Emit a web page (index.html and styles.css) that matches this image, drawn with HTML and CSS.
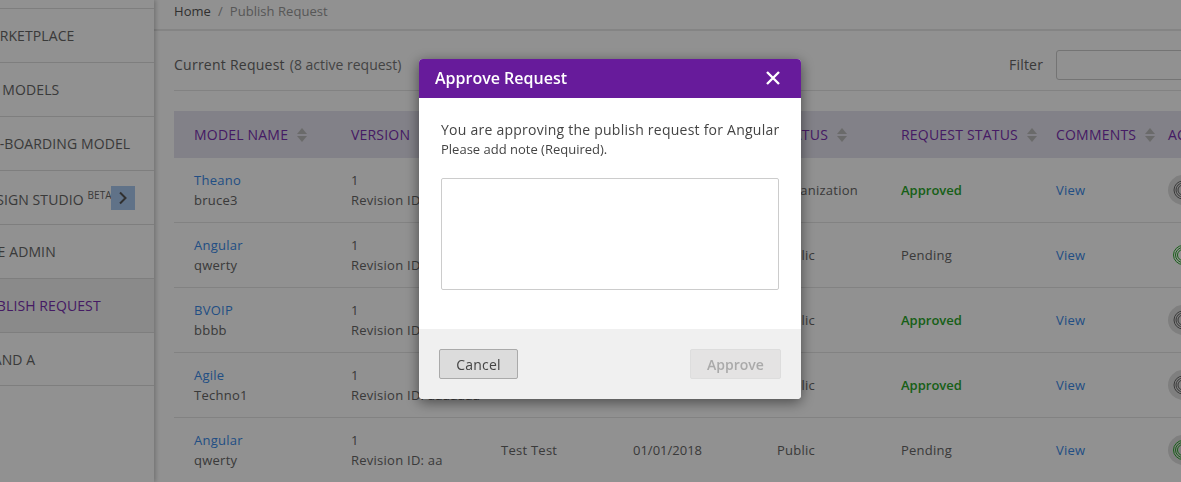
FILE: index.html
```html
<!DOCTYPE html>
<html lang="en">
<head>
  <meta charset="UTF-8" />
  <title>Publish Request</title>
  <link rel="stylesheet" href="styles.css">
</head>
<body>
  <div class="page">
    <nav class="sidebar">
      <a class="nav-item">MARKETPLACE</a>
      <a class="nav-item">MY MODELS</a>
      <a class="nav-item">ON-BOARDING MODEL</a>
      <a class="nav-item nav-beta">DESIGN STUDIO <sup>BETA</sup>
        <span class="nav-toggle">
          <svg width="10" height="14" viewBox="0 0 10 14"><path d="M2 1.5 7.5 7 2 12.5" fill="none" stroke="#555" stroke-width="2"/></svg>
        </span>
      </a>
      <a class="nav-item">SITE ADMIN</a>
      <a class="nav-item active">PUBLISH REQUEST</a>
      <a class="nav-item">Q AND A</a>
    </nav>

    <main class="main">
      <div class="breadcrumb"><span class="crumb-home">Home</span><span class="crumb-sep">/</span><span class="crumb-now">Publish Request</span></div>

      <div class="content">
        <div class="title-row">
          <div class="title">Current Request <span class="title-count">(8 active request)</span></div>
          <label class="filter">Filter <input class="filter-input" type="text"></label>
        </div>

        <table class="requests">
          <colgroup>
            <col class="c-name"><col class="c-version"><col class="c-by"><col class="c-date">
            <col class="c-status"><col class="c-request"><col class="c-comments"><col class="c-action">
          </colgroup>
          <thead>
            <tr>
              <th>MODEL NAME <i class="sort"></i></th>
              <th>VERSION <i class="sort"></i></th>
              <th>REQUESTER <i class="sort"></i></th>
              <th>DATE <i class="sort"></i></th>
              <th>STATUS <i class="sort"></i></th>
              <th>REQUEST STATUS <i class="sort"></i></th>
              <th>COMMENTS <i class="sort"></i></th>
              <th>ACTION</th>
            </tr>
          </thead>
          <tbody>
            <tr>
              <td><a class="link">Theano</a><br>bruce3</td>
              <td>1<br>Revision ID: aa</td>
              <td>Test Test</td>
              <td class="date">01/01/2018</td>
              <td>Organization</td>
              <td class="approved">Approved</td>
              <td><a class="link">View</a></td>
              <td><span class="action"><svg width="30" height="30" viewBox="0 0 30 30"><g fill="none" stroke="#666"><circle cx="15" cy="15" r="9"/><circle cx="15" cy="15" r="7"/><circle cx="15" cy="15" r="5"/></g></svg></span></td>
            </tr>
            <tr>
              <td><a class="link">Angular</a><br>qwerty</td>
              <td>1<br>Revision ID: aa</td>
              <td>Test Test</td>
              <td class="date">01/01/2018</td>
              <td>Public</td>
              <td>Pending</td>
              <td><a class="link">View</a></td>
              <td><span class="action plain"><svg width="30" height="30" viewBox="0 0 30 30"><g fill="none" stroke="#2aa82a"><circle cx="15" cy="15" r="9.5"/><circle cx="15" cy="15" r="7.5"/><circle cx="15" cy="15" r="5.5"/></g></svg></span></td>
            </tr>
            <tr>
              <td><a class="link">BVOIP</a><br>bbbb</td>
              <td>1<br>Revision ID: aa</td>
              <td>Test Test</td>
              <td class="date">01/01/2018</td>
              <td>Public</td>
              <td class="approved">Approved</td>
              <td><a class="link">View</a></td>
              <td><span class="action"><svg width="30" height="30" viewBox="0 0 30 30"><g fill="none" stroke="#666"><circle cx="15" cy="15" r="9"/><circle cx="15" cy="15" r="7"/><circle cx="15" cy="15" r="5"/></g></svg></span></td>
            </tr>
            <tr>
              <td><a class="link">Agile</a><br>Techno1</td>
              <td>1<br>Revision ID: aaaaaaa</td>
              <td>Test Test</td>
              <td class="date">01/01/2018</td>
              <td>Public</td>
              <td class="approved">Approved</td>
              <td><a class="link">View</a></td>
              <td><span class="action"><svg width="30" height="30" viewBox="0 0 30 30"><g fill="none" stroke="#666"><circle cx="15" cy="15" r="9"/><circle cx="15" cy="15" r="7"/><circle cx="15" cy="15" r="5"/></g></svg></span></td>
            </tr>
            <tr>
              <td><a class="link">Angular</a><br>qwerty</td>
              <td>1<br>Revision ID: aa</td>
              <td>Test Test</td>
              <td class="date">01/01/2018</td>
              <td>Public</td>
              <td>Pending</td>
              <td><a class="link">View</a></td>
              <td><span class="action"><svg width="30" height="30" viewBox="0 0 30 30"><g fill="none" stroke="#2aa82a"><circle cx="15" cy="15" r="9.5"/><circle cx="15" cy="15" r="7.5"/><circle cx="15" cy="15" r="5.5"/></g></svg></span></td>
            </tr>
          </tbody>
        </table>
      </div>
    </main>
  </div>

  <div class="backdrop"></div>

  <div class="modal">
    <div class="modal-head">
      <span class="modal-title">Approve Request</span>
      <svg class="modal-close" width="16" height="16" viewBox="0 0 16 16"><path d="M2 2 14 14M14 2 2 14" stroke="#fff" stroke-width="2.4" fill="none"/></svg>
    </div>
    <div class="modal-body">
      <p class="modal-text">You are approving the publish request for Angular</p>
      <p class="modal-hint">Please add note (Required).</p>
      <textarea class="modal-note"></textarea>
    </div>
    <div class="modal-foot">
      <button class="btn btn-cancel">Cancel</button>
      <button class="btn btn-approve" disabled>Approve</button>
    </div>
  </div>
</body>
</html>
```

FILE: styles.css
```css
* {
  box-sizing: border-box;
}

html, body {
  height: 100%;
}

body {
  margin: 0;
  overflow: hidden;
  background: #fff;
  color: #666;
  font-family: "Open Sans", sans-serif;
  font-size: 13px;
}

.page {
  display: flex;
  height: 482px;
  margin-left: -22px;
  width: 1300px;
}

/* sidebar */
.sidebar {
  flex: none;
  width: 176px;
  padding-top: 8px;
  background: #fff;
  box-shadow: 2px 0 4px rgba(0, 0, 0, 0.2);
  position: relative;
  z-index: 1;
}

.nav-item {
  display: block;
  position: relative;
  height: 54px;
  line-height: 53px;
  border-top: 1px solid #ddd;
  font-size: 14px;
  font-weight: 500;
  letter-spacing: 0.1px;
  color: #666;
  white-space: nowrap;
}

.nav-item:last-child {
  border-bottom: 1px solid #ddd;
}

.nav-item sup {
  font-size: 10px;
  font-weight: 400;
  line-height: 0;
}

.nav-beta {
  line-height: 57px;
}

.nav-item.active {
  background: #f2f2f2;
  color: #7a30b0;
}

.nav-toggle {
  position: absolute;
  left: 133px;
  top: 15px;
  width: 24px;
  height: 24px;
  background: #a9c8f0;
  display: flex;
  align-items: center;
  justify-content: center;
}

/* main */
.main {
  flex: 1;
  min-width: 0;
}

.breadcrumb {
  display: flex;
  align-items: center;
  height: 38px;
  padding-left: 20px;
  margin-top: -7px;
  border-bottom: 2px solid #e8e8e8;
  letter-spacing: 0.05px;
}

.crumb-home {
  color: #555;
}

.crumb-sep {
  margin: 0 7px;
  color: #999;
}

.crumb-now {
  color: #999;
}

.content {
  padding: 0 20px;
}

.title-row {
  display: flex;
  align-items: center;
  height: 60px;
  padding-top: 8px;
  border-bottom: 1px solid #e5e5e5;
}

.title {
  flex: none;
  width: 835px;
  font-size: 14px;
  letter-spacing: 0.25px;
  font-weight: 500;
}

.title-count {
  margin-left: 1px;
  font-weight: 400;
  letter-spacing: 0;
  color: #777;
}

.filter {
  display: flex;
  align-items: center;
  gap: 13px;
  font-size: 14px;
  font-weight: 500;
  letter-spacing: 0.2px;
}

.filter-input {
  width: 200px;
  height: 30px;
  border: 1px solid #ccc;
  border-radius: 3px;
  background: #fff;
}

/* table */
.requests {
  table-layout: fixed;
  border-collapse: separate;
  border-spacing: 0;
  width: 1082px;
  margin-top: 20px;
}

.c-name { width: 157px; }
.c-version { width: 150px; }
.c-by { width: 132px; }
.c-date { width: 144px; }
.c-status { width: 124px; }
.c-request { width: 155px; }
.c-comments { width: 112px; }
.c-action { width: 108px; }

.requests th {
  height: 47px;
  padding: 0 0 1px 20px;
  background: #e5e3ef;
  color: #7a30b0;
  font-size: 14px;
  font-weight: 500;
  letter-spacing: 0.2px;
  text-align: left;
  white-space: nowrap;
}

.requests td {
  height: 65px;
  padding: 0 0 0 20px;
  border-bottom: 1px solid #e5e5e5;
  line-height: 20px;
  letter-spacing: 0.25px;
  white-space: nowrap;
  vertical-align: middle;
}

.requests td.date {
  letter-spacing: 0;
}

.link {
  color: #3a8ae8;
  font-weight: 500;
}

.requests td:first-child .link {
  font-weight: 400;
}

.requests td.approved {
  color: #2aa82a;
  font-weight: 600;
  letter-spacing: 0;
}

.sort {
  display: inline-block;
  position: relative;
  width: 10px;
  height: 14px;
  margin-left: 5px;
  vertical-align: -2px;
}

.sort::before, .sort::after {
  content: "";
  position: absolute;
  left: 0;
  border-left: 5px solid transparent;
  border-right: 5px solid transparent;
}

.sort::before {
  top: 0;
  border-bottom: 6px solid #bbb;
}

.sort::after {
  bottom: 0;
  border-top: 6px solid #bbb;
}

.action {
  display: inline-flex;
  width: 30px;
  height: 30px;
  border-radius: 50%;
  background: #e0e0e0;
  vertical-align: middle;
}

.action.plain {
  background: none;
}

/* modal */
.backdrop {
  position: fixed;
  inset: 0;
  background: rgba(0, 0, 0, 0.43);
  z-index: 10;
}

.modal {
  position: fixed;
  left: 419px;
  top: 59px;
  width: 382px;
  border-radius: 4px;
  overflow: hidden;
  background: #fff;
  box-shadow: 0 3px 14px rgba(0, 0, 0, 0.5);
  z-index: 11;
  color: #444;
}

.modal-head {
  display: flex;
  align-items: center;
  justify-content: space-between;
  height: 39px;
  padding: 0 20px 2px 16px;
  background: #671b9b;
}

.modal-title {
  color: #fff;
  font-size: 16px;
  font-weight: 600;
}

.modal-body {
  height: 231px;
  padding: 23px 22px 0;
}

.modal-text {
  margin: 0 0 1px;
  font-size: 14px;
  line-height: 18px;
  letter-spacing: 0.24px;
  white-space: nowrap;
}

.modal-hint {
  margin: 0 0 20px;
  font-size: 13px;
  line-height: 18px;
}

.modal-note {
  display: block;
  width: 338px;
  height: 112px;
  border: 1px solid #ccc;
  border-radius: 2px;
  background: #fff;
  resize: none;
}

.modal-foot {
  display: flex;
  justify-content: space-between;
  height: 70px;
  padding: 20px 20px 0;
  background: #f0f0f0;
}

.btn {
  height: 30px;
  border-radius: 2px;
  font-family: inherit;
  font-size: 14px;
}

.btn-cancel {
  width: 79px;
  background: #dcdcdc;
  border: 1px solid #aaa;
  color: #444;
  letter-spacing: 0.2px;
}

.btn-approve {
  width: 91px;
  background: #e4e3e3;
  border: 1px solid #ddd;
  color: #aaa;
  font-weight: 600;
}
```
